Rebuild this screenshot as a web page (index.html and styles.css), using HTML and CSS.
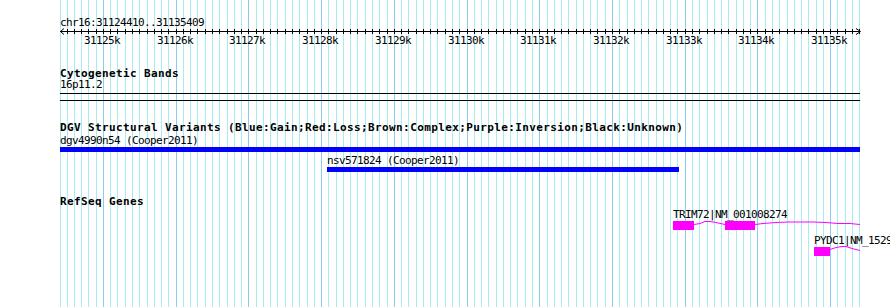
FILE: index.html
```html
<!DOCTYPE html>
<html lang="en">
  <head>
    <meta charset="UTF-8" />
    <meta name="viewport" content="width=device-width, initial-scale=1.0" />
    <title>chr16:31124410..31135409</title>
    <link rel="stylesheet" href="styles.css">
  </head>

  <body>
    <div class="browser">
      <!-- 100bp grid, filled in by the script below -->
      <svg class="grid" id="grid" width="801" height="307"></svg>

      <div class="panel">
        <div class="pos-label">chr16:31124410..31135409</div>
        <svg class="ruler" id="ruler" width="801" height="20"></svg>

        <div class="track cyto-track">
          <div class="track-title">Cytogenetic Bands</div>
          <div class="feature-label">16p11.2</div>
          <div class="band"></div>
        </div>

        <div class="track dgv-track">
          <div class="track-title">DGV Structural Variants (Blue:Gain;Red:Loss;Brown:Complex;Purple:Inversion;Black:Unknown)</div>
          <div class="feature" style="margin-left: 0px; width: 800px">
            <div class="feature-label">dgv4990n54 (Cooper2011)</div>
            <div class="bar gain"></div>
          </div>
          <div class="feature" style="margin-left: 267px; width: 352px">
            <div class="feature-label">nsv571824 (Cooper2011)</div>
            <div class="bar gain"></div>
          </div>
        </div>

        <div class="track gene-track">
          <div class="track-title">RefSeq Genes</div>
          <svg class="genes" width="800" height="60">
            <text class="gene-name" x="613" y="10.5">TRIM72|NM_001008274</text>
            <polyline class="intron" points="634,17.5 640,16.5 645,14.5 650,14.5 656,15.5 665,17.5" />
            <polyline class="intron" points="695,17.5 703,16.5 716,15.5 728,15 753,15 766,15.5 778,16.5 790,16.5 800,17.5" />
            <rect class="exon" x="613" y="14" width="21" height="9" />
            <rect class="exon" x="665" y="14" width="30" height="9" />

            <text class="gene-name" x="754" y="36.5">PYDC1|NM_152901</text>
            <polyline class="intron" points="770,42.5 776,40.5 782,39.5 786,39.5 792,41.5 800,43.5" />
            <rect class="exon" x="754" y="40" width="16" height="9" />
          </svg>
        </div>
      </div>
    </div>

    <script>
      const START = 31124410;
      const END = 31135409;
      const WIDTH = 800;
      const NS = "http://www.w3.org/2000/svg";

      const toX = (bp) => Math.round(((bp - START) * WIDTH) / (END - START + 1));

      function add(parent, name, attrs, text) {
        const node = document.createElementNS(NS, name);
        for (const key in attrs) node.setAttribute(key, attrs[key]);
        if (text) node.textContent = text;
        parent.appendChild(node);
        return node;
      }

      const grid = document.getElementById("grid");
      const ruler = document.getElementById("ruler");

      // left edge of the view
      add(grid, "line", { x1: 0.5, x2: 0.5, y1: 0, y2: 307, class: "minor" });

      // axis with arrows on both ends
      add(ruler, "line", { x1: 0, x2: 800, y1: 3.5, y2: 3.5, class: "axis" });
      add(ruler, "polyline", { points: "4,0.5 0.5,3.5 4,6.5", class: "arrow" });
      add(ruler, "polyline", { points: "796,0.5 800.5,3.5 796,6.5", class: "arrow" });

      for (let bp = Math.ceil(START / 100) * 100; bp <= END; bp += 100) {
        const x = toX(bp) + 0.5;
        const major = bp % 1000 === 0;
        add(grid, "line", { x1: x, x2: x, y1: 0, y2: 307, class: major ? "major" : "minor" });
        add(ruler, "line", { x1: x, x2: x, y1: 1, y2: 6, class: "tick" });
        if (major) {
          add(ruler, "text", { x: x - 1.5, y: 15.5, class: "tick-label" }, bp / 1000 + "k");
        }
      }
    </script>
  </body>
</html>
```

FILE: styles.css
```css
body {
  margin: 0;
  background-color: #fff;
  color: #000;
  font-family: "DejaVu Sans Mono", "Liberation Mono", monospace;
}

.browser {
  position: relative;
  width: 890px;
  height: 307px;
  overflow: hidden;
}

.grid {
  position: absolute;
  left: 60px;
  top: 0;
  shape-rendering: crispEdges;
}

.grid .minor {
  stroke: #a8ecf2;
  stroke-width: 1;
}

.grid .major {
  stroke: #8ccbed;
  stroke-width: 1;
}

.panel {
  position: relative;
  width: 800px;
  padding: 17px 0 0 60px;
}

.pos-label,
.feature-label {
  height: 11px;
  font-size: 11px;
  line-height: 11px;
  letter-spacing: -0.62px;
  white-space: nowrap;
}

.track-title {
  height: 11px;
  font-size: 11px;
  font-weight: bold;
  line-height: 11px;
  letter-spacing: 0.38px;
  white-space: nowrap;
}

.ruler {
  display: block;
  overflow: visible;
}

.ruler .axis,
.ruler .tick {
  stroke: #000;
  stroke-width: 1;
  shape-rendering: crispEdges;
}

.ruler .arrow {
  fill: none;
  stroke: #000;
  stroke-width: 1;
}

.tick-label {
  font-size: 11px;
  letter-spacing: -0.62px;
  text-anchor: middle;
  fill: #000;
}

.cyto-track {
  margin-top: 20px;
}

.band {
  height: 6px;
  margin-top: 3px;
  border-top: 1px solid #000;
  border-bottom: 1px solid #000;
}

.dgv-track {
  margin-top: 21px;
}

.feature {
  margin-top: 2px;
}

.feature + .feature {
  margin-top: 3px;
}

.bar {
  height: 5px;
  margin-top: 1px;
}

.bar.gain {
  background-color: #0000ff;
}

.gene-track {
  margin-top: 24px;
}

.genes {
  display: block;
  overflow: visible;
}

.gene-name {
  font-size: 11px;
  letter-spacing: -0.62px;
  fill: #000;
}

.exon {
  fill: #ff00ff;
  shape-rendering: crispEdges;
}

.intron {
  fill: none;
  stroke: #ff00ff;
  stroke-width: 1;
}
```
